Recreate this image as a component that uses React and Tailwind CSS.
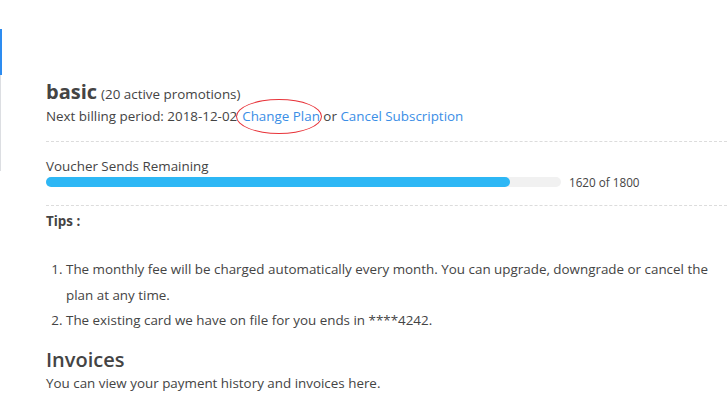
import React from "react";

const tips = [
    "The monthly fee will be charged automatically every month. You can upgrade, downgrade or cancel the plan at any time.",
    "The existing card we have on file for you ends in ****4242.",
];

export default function App() {
    const used = 1620;
    const total = 1800;

    return (
        <div className="w-[727px] h-[416px] bg-white overflow-hidden flex text-[#444] font-['Open_Sans','Noto_Sans',sans-serif]">
            {/* edge of the side menu */}
            <div className="flex flex-col pt-[29px] w-[2px] shrink-0">
                <div className="h-[46px] w-[2px] bg-[#2d8cf0]" />
                <div className="h-[96px] w-[1px] bg-[#dcdee2]" />
            </div>

            <div className="flex-1 pl-[44px] pt-[80px]">
                <div className="leading-[24px]">
                    <span className="text-[20px] font-bold text-[#444]">basic</span>
                    <span className="text-[13.4px] ml-1">(20 active promotions)</span>
                </div>
                <div className="text-[13.4px] leading-[20px]">
                    Next billing period: 2018-12-02
                    <span className="relative ml-[5px] text-[#3a8ee6]">
                        Change Plan
                        <span className="absolute -left-[6px] -right-[2px] -top-[8px] -bottom-[9px] border border-[#e8343a] rounded-[50%]" />
                    </span>
                    <span> or </span>
                    <span className="text-[#3a8ee6]">Cancel Subscription</span>
                </div>

                <div className="mt-[15px] border-t border-dashed border-[#dcdcdc]" />

                <div className="pt-[15px] pb-[16px]">
                    <div className="text-[13.4px] leading-[18px]">Voucher Sends Remaining</div>
                    <div className="flex items-center h-[14px]">
                        <div className="w-[515px] h-[10px] rounded-full bg-[#f1f1f1]">
                            <div className="h-full rounded-full bg-[#2db7f5]" style={{ width: `${(used / total) * 100}%` }} />
                        </div>
                        <span className="ml-[8px] text-[11.7px] leading-[18px]">{used} of {total}</span>
                    </div>
                </div>

                <div className="border-t border-dashed border-[#dcdcdc]" />

                <div className="pt-[5px] text-[13.4px] leading-[20px] font-bold">Tips :</div>

                <ol className="mt-[26px] pl-[20px] list-decimal text-[13.4px] leading-[25.5px]">
                    {tips.map((tip, index) => (
                        <li key={index}>{tip}</li>
                    ))}
                </ol>

                <div className="mt-[14px] text-[20px] leading-[24px] font-semibold text-[#444]">Invoices</div>
                <div className="text-[13.4px] leading-[22px]">You can view your payment history and invoices here.</div>
            </div>
        </div>
    );
}
